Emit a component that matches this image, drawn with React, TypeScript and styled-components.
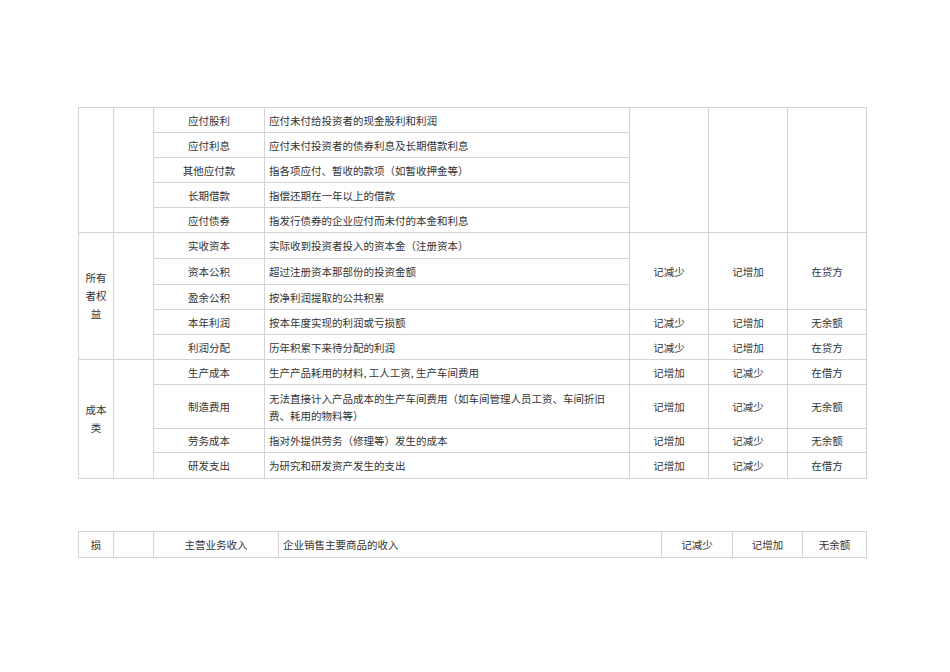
import React from "react";
import styled, { createGlobalStyle } from "styled-components";

const Global = createGlobalStyle`
  html, body { margin: 0; padding: 0; background: #fff; }
  body { font-family: "Noto Sans CJK SC", "Noto Sans", sans-serif; color: #333; }
`;

const Page = styled.div`
  width: 950px;
  padding: 107px 0 0 78px;
  box-sizing: border-box;
  display: flex;
  flex-direction: column;
  gap: 52px;
`;

const Table = styled.table`
  border-collapse: collapse;
  table-layout: fixed;
  width: 789px;
  font-size: 10.5px;
  color: #333;
`;

const Row = styled.tr<{ $h?: number }>`
  height: ${(p) => p.$h ?? 25}px;
`;

const Cell = styled.td<{ $align?: "left" | "center" }>`
  border: 1px solid #d3d3d3;
  padding: 0 4px;
  text-align: ${(p) => p.$align ?? "center"};
  vertical-align: middle;
  line-height: 17px;
  overflow: hidden;
  word-break: break-all;
`;

const Category = styled(Cell)`
  padding: 0 6px;
  line-height: 18px;
`;

type R = { name: string; desc: string; h?: number };

const liab: R[] = [
  { name: "应付股利", desc: "应付未付给投资者的现金股利和利润" },
  { name: "应付利息", desc: "应付未付投资者的债券利息及长期借款利息" },
  { name: "其他应付款", desc: "指各项应付、暂收的款项（如暂收押金等）" },
  { name: "长期借款", desc: "指偿还期在一年以上的借款" },
  { name: "应付债券", desc: "指发行债券的企业应付而未付的本金和利息" },
];

const equity: R[] = [
  { name: "实收资本", desc: "实际收到投资者投入的资本金（注册资本）", h: 26 },
  { name: "资本公积", desc: "超过注册资本那部份的投资金额", h: 26 },
  { name: "盈余公积", desc: "按净利润提取的公共积累", h: 25 },
  { name: "本年利润", desc: "按本年度实现的利润或亏损额", h: 25 },
  { name: "利润分配", desc: "历年积累下来待分配的利润", h: 25 },
];

const cost: (R & { d: string; c: string; b: string })[] = [
  { name: "生产成本", desc: "生产产品耗用的材料, 工人工资, 生产车间费用", d: "记增加", c: "记减少", b: "在借方", h: 25 },
  { name: "制造费用", desc: "无法直接计入产品成本的生产车间费用（如车间管理人员工资、车间折旧费、耗用的物料等）", d: "记增加", c: "记减少", b: "无余额", h: 44 },
  { name: "劳务成本", desc: "指对外提供劳务（修理等）发生的成本", d: "记增加", c: "记减少", b: "无余额", h: 24 },
  { name: "研发支出", desc: "为研究和研发资产发生的支出", d: "记增加", c: "记减少", b: "在借方", h: 26 },
];

export default function App() {
  return (
    <>
      <Global />
      <Page>
        <Table>
          <colgroup>
            <col style={{ width: 35 }} />
            <col style={{ width: 40 }} />
            <col style={{ width: 111 }} />
            <col style={{ width: 365 }} />
            <col style={{ width: 79 }} />
            <col style={{ width: 79 }} />
            <col style={{ width: 79 }} />
          </colgroup>
          <tbody>
            {liab.map((r, i) => (
              <Row key={r.name}>
                {i === 0 && <Cell rowSpan={5} />}
                {i === 0 && <Cell rowSpan={5} />}
                <Cell>{r.name}</Cell>
                <Cell $align="left">{r.desc}</Cell>
                {i === 0 && <Cell rowSpan={5} />}
                {i === 0 && <Cell rowSpan={5} />}
                {i === 0 && <Cell rowSpan={5} />}
              </Row>
            ))}
            {equity.map((r, i) => (
              <Row key={r.name} $h={r.h}>
                {i === 0 && <Category rowSpan={5}>所有者权益</Category>}
                {i === 0 && <Cell rowSpan={5} />}
                <Cell>{r.name}</Cell>
                <Cell $align="left">{r.desc}</Cell>
                {i === 0 && <Cell rowSpan={3}>记减少</Cell>}
                {i === 0 && <Cell rowSpan={3}>记增加</Cell>}
                {i === 0 && <Cell rowSpan={3}>在贷方</Cell>}
                {i === 3 && (
                  <>
                    <Cell>记减少</Cell>
                    <Cell>记增加</Cell>
                    <Cell>无余额</Cell>
                  </>
                )}
                {i === 4 && (
                  <>
                    <Cell>记减少</Cell>
                    <Cell>记增加</Cell>
                    <Cell>在贷方</Cell>
                  </>
                )}
              </Row>
            ))}
            {cost.map((r, i) => (
              <Row key={r.name} $h={r.h}>
                {i === 0 && <Category rowSpan={4}>成本类</Category>}
                {i === 0 && <Cell rowSpan={4} />}
                <Cell>{r.name}</Cell>
                <Cell $align="left">{r.desc}</Cell>
                <Cell>{r.d}</Cell>
                <Cell>{r.c}</Cell>
                <Cell>{r.b}</Cell>
              </Row>
            ))}
          </tbody>
        </Table>

        <Table>
          <colgroup>
            <col style={{ width: 35 }} />
            <col style={{ width: 40 }} />
            <col style={{ width: 125 }} />
            <col style={{ width: 383 }} />
            <col style={{ width: 71 }} />
            <col style={{ width: 70 }} />
            <col style={{ width: 64 }} />
          </colgroup>
          <tbody>
            <Row $h={26}>
              <Cell>损</Cell>
              <Cell />
              <Cell>主营业务收入</Cell>
              <Cell $align="left">企业销售主要商品的收入</Cell>
              <Cell>记减少</Cell>
              <Cell>记增加</Cell>
              <Cell>无余额</Cell>
            </Row>
          </tbody>
        </Table>
      </Page>
    </>
  );
}
